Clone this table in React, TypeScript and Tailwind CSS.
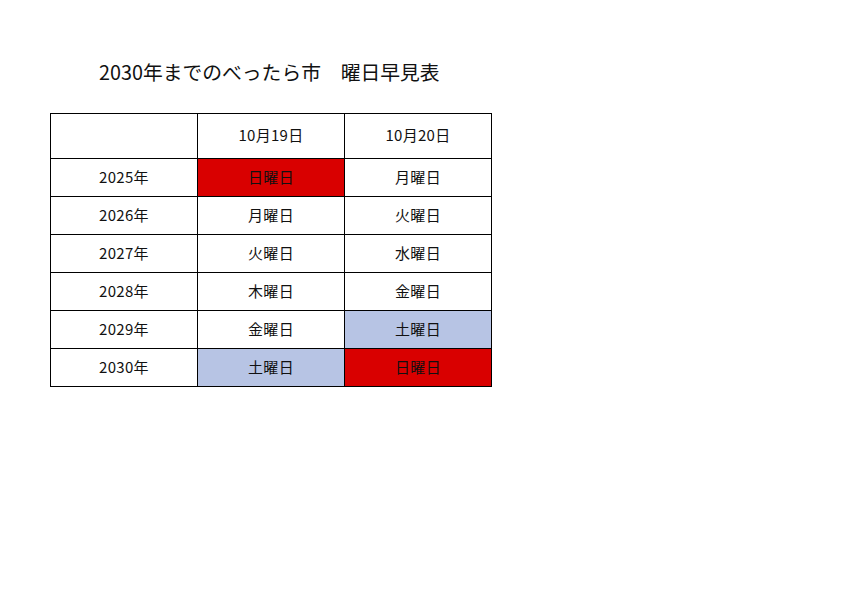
const rows = [
  { year: '2025年', d19: '日曜日', d20: '月曜日' },
  { year: '2026年', d19: '月曜日', d20: '火曜日' },
  { year: '2027年', d19: '火曜日', d20: '水曜日' },
  { year: '2028年', d19: '木曜日', d20: '金曜日' },
  { year: '2029年', d19: '金曜日', d20: '土曜日' },
  { year: '2030年', d19: '土曜日', d20: '日曜日' },
];

function dayBg(day: string) {
  if (day === '日曜日') return 'bg-[#d90000]';
  if (day === '土曜日') return 'bg-[#b7c4e4]';
  return 'bg-white';
}

export default function App() {
  return (
    <div
      className="w-[842px] h-[595px] bg-white text-[#111] pt-[59px] pl-[50px]"
      style={{ fontFamily: '"Noto Sans CJK JP", "Noto Sans", sans-serif' }}
    >
      <h1 className="ml-[49px] text-[19.8px] leading-[26px] font-normal">2030年までのべったら市　曜日早見表</h1>

      <table className="mt-[28px] border-collapse text-[15px] leading-none tracking-[0.3px]">
        <tbody>
          <tr className="h-[45px]">
            <td className="w-[147px] border border-black"></td>
            <td className="w-[147px] border border-black text-center pb-[3px]">10月19日</td>
            <td className="w-[147px] border border-black text-center pb-[3px]">10月20日</td>
          </tr>
          {rows.map((r) => (
            <tr key={r.year} className="h-[38px]">
              <td className="border border-black text-center pb-[3px]">{r.year}</td>
              <td className={`border border-black text-center pb-[3px] ${dayBg(r.d19)}`}>{r.d19}</td>
              <td className={`border border-black text-center pb-[3px] ${dayBg(r.d20)}`}>{r.d20}</td>
            </tr>
          ))}
        </tbody>
      </table>
    </div>
  );
}
